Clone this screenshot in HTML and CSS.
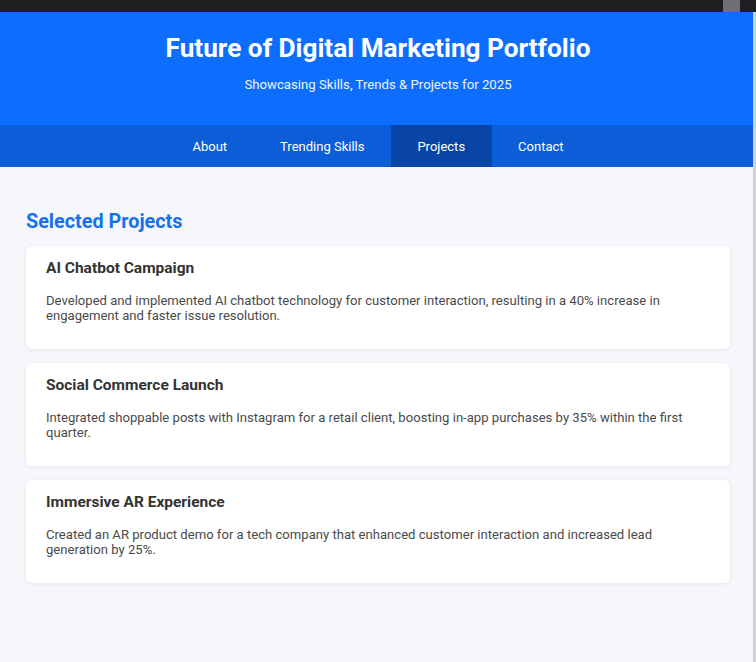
FILE: index.html
```html
<!DOCTYPE html>
<html lang="en">
<head>
<meta charset="utf-8">
<title>Future of Digital Marketing Portfolio</title>
<link rel="stylesheet" href="styles.css">
</head>
<body>
<div class="topbar"><span class="thumb"></span></div>
<header class="hero">
  <h1>Future of Digital Marketing Portfolio</h1>
  <p>Showcasing Skills, Trends &amp; Projects for 2025</p>
</header>
<nav class="nav">
  <a class="nav-item" href="#about">About</a>
  <a class="nav-item" href="#skills">Trending Skills</a>
  <a class="nav-item active" href="#projects">Projects</a>
  <a class="nav-item" href="#contact">Contact</a>
</nav>
<main class="main">
  <h2 class="section-title">Selected Projects</h2>
  <div class="cards">
    <article class="card">
      <h3>AI Chatbot Campaign</h3>
      <p>Developed and implemented AI chatbot technology for customer interaction, resulting in a 40% increase in engagement and faster issue resolution.</p>
    </article>
    <article class="card">
      <h3>Social Commerce Launch</h3>
      <p>Integrated shoppable posts with Instagram for a retail client, boosting in-app purchases by 35% within the first quarter.</p>
    </article>
    <article class="card">
      <h3>Immersive AR Experience</h3>
      <p>Created an AR product demo for a tech company that enhanced customer interaction and increased lead generation by 25%.</p>
    </article>
  </div>
</main>
<div class="edge"></div>
</body>
</html>
```
FILE: styles.css
```css
html, body {
  margin: 0;
  padding: 0;
}
body {
  font-family: Roboto, "Liberation Sans", Arial, sans-serif;
  background: #f5f7fb;
  color: #333;
  min-height: 662px;
}
.topbar {
  height: 12px;
  background: #1e1e20;
  display: flex;
  justify-content: flex-end;
}
.thumb {
  width: 17px;
  height: 12px;
  margin-right: 16px;
  background: #6f6f75;
}
.hero {
  background: #0d6efd;
  color: #fff;
  text-align: center;
  padding: 21px 0 21px;
}
.hero h1 {
  margin: 0;
  font-size: 26.2px;
  font-weight: 700;
  line-height: 30px;
}
.hero p {
  margin: 14px 0 12px;
  font-size: 13.2px;
  line-height: 15px;
  color: #eef4ff;
}
.nav {
  display: flex;
  justify-content: center;
  background: #0b5ed7;
  height: 42px;
}
.nav-item {
  display: flex;
  align-items: center;
  padding: 0 26.5px;
  color: #fff;
  text-decoration: none;
  font-size: 13px;
}
.nav-item.active {
  background: #0845a6;
}
.main {
  padding: 26px 26px 40px;
}
.section-title {
  margin: 17px 0 13px;
  font-size: 19.8px;
  line-height: 23px;
  font-weight: 700;
  color: #1672ec;
}
.cards {
  display: flex;
  flex-direction: column;
  gap: 14px;
}
.card {
  background: #fff;
  border-radius: 6px;
  box-shadow: 0 1px 5px rgba(0, 0, 0, 0.07);
  padding: 13px 20px;
}
.card h3 {
  margin: 0 0 16px;
  font-size: 15.5px;
  line-height: 18px;
  font-weight: 700;
  color: #333;
}
.card p {
  margin: 0 0 13px;
  font-size: 13.1px;
  line-height: 15px;
  color: #4a4a4a;
}
.edge {
  position: fixed;
  top: 12px;
  right: 0;
  bottom: 0;
  width: 3px;
  background: #cfd1d6;
}
```
